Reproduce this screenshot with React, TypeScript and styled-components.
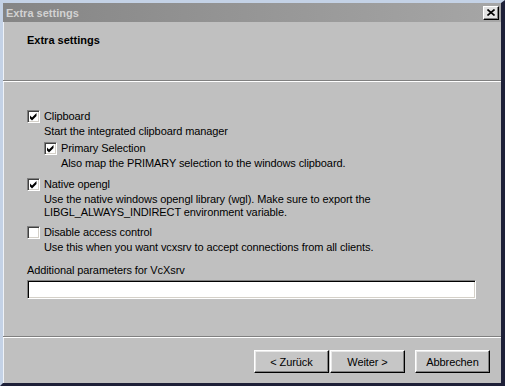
import React from 'react';
import styled, { createGlobalStyle } from 'styled-components';

const GlobalStyle = createGlobalStyle`
  html, body {
    margin: 0;
    padding: 0;
    background: #c0c0c0;
  }
  body {
    font-family: "Liberation Sans", Arial, sans-serif;
    font-size: 11px;
    color: #000;
  }
`;

const Window = styled.div`
  width: 505px;
  height: 386px;
  box-sizing: border-box;
  display: flex;
  flex-direction: column;
  background: #c0c0c0;
  border-style: solid;
  border-width: 3px 4px 3px 3px;
  border-color: #c4d2e6 #1e2038 #1e2038 #c4d2e6;
  box-shadow: inset 1px 1px 0 #eef2f8;
`;

const TitleBar = styled.div`
  height: 19px;
  flex: none;
  display: flex;
  align-items: center;
  justify-content: space-between;
  padding: 0 2px 0 3px;
  background: linear-gradient(to right, #858585, #a6a6a6);
`;

const TitleText = styled.span`
  color: #d2d2d2;
  font-weight: 700;
  font-size: 11px;
`;

const CloseButton = styled.button`
  width: 16px;
  height: 14px;
  padding: 0;
  display: flex;
  align-items: center;
  justify-content: center;
  background: #e2e2e2;
  border-style: solid;
  border-width: 1px;
  border-color: #ffffff #000000 #000000 #ffffff;
  box-shadow: inset -1px -1px 0 #808080;
`;

const Header = styled.div`
  height: 59px;
  flex: none;
  box-sizing: border-box;
  padding: 12px 0 0 24px;
  border-bottom: 1px solid #808080;
  box-shadow: 0 1px 0 #ffffff;
`;

const HeaderTitle = styled.div`
  font-weight: 700;
  font-size: 11px;
  line-height: 13px;
`;

const Body = styled.div`
  flex: 1;
  display: flex;
  flex-direction: column;
  padding: 27px 26px 0 24px;
  margin-top: 1px;
  letter-spacing: -0.1px;
`;

const Option = styled.div<{ indent?: boolean; gap?: number }>`
  display: flex;
  flex-direction: column;
  margin-left: ${({ indent }) => (indent ? 17 : 0)}px;
  margin-top: ${({ gap }) => gap ?? 0}px;
`;

const OptionRow = styled.label`
  height: 15px;
  display: flex;
  align-items: center;
  gap: 4px;
  line-height: 13px;
`;

const Box = styled.span`
  width: 13px;
  height: 13px;
  box-sizing: border-box;
  flex: none;
  background: #ffffff;
  border-style: solid;
  border-width: 1px;
  border-color: #808080 #ffffff #ffffff #808080;
  box-shadow: inset 1px 1px 0 #404040, inset -1px -1px 0 #d4d0c8;
  display: flex;
  align-items: center;
  justify-content: center;
`;

const Description = styled.div<{ first?: boolean }>`
  padding-left: 17px;
  margin-top: ${({ first }) => (first ? 1 : 0)}px;
  line-height: 13px;
`;

const FieldLabel = styled.div`
  margin-top: 10px;
  line-height: 13px;
`;

const TextInput = styled.input`
  margin-top: 3px;
  height: 19px;
  box-sizing: border-box;
  width: 449px;
  padding: 0 3px;
  font: inherit;
  background: #ffffff;
  border-style: solid;
  border-width: 1px;
  border-color: #808080 #ffffff #ffffff #808080;
  box-shadow: inset 1px 1px 0 #000000, inset -1px -1px 0 #d4d0c8;
  outline: none;
`;

const Footer = styled.div`
  flex: none;
  border-top: 1px solid #808080;
  box-shadow: inset 0 1px 0 #ffffff;
  display: flex;
  justify-content: flex-end;
  padding: 13px 11px 10px 0;
`;

const Button = styled.button<{ spaced?: boolean }>`
  width: 75px;
  height: 23px;
  box-sizing: border-box;
  margin-left: ${({ spaced }) => (spaced ? 10 : 1)}px;
  padding: 0;
  font-family: "Liberation Sans", Arial, sans-serif;
  font-size: 11px;
  letter-spacing: -0.1px;
  color: #000;
  background: #c6c6c6;
  border-style: solid;
  border-width: 1px;
  border-color: #ffffff #000000 #000000 #ffffff;
  box-shadow: inset -1px -1px 0 #808080, inset 1px 1px 0 #e8e8e8;
`;

const Check = () => (
  <svg width="9" height="9" viewBox="0 0 9 9">
    <path d="M1 3.5 L3 5.5 L7.5 1 L7.5 4 L3 8.5 L1 6.5 Z" fill="#000" />
  </svg>
);

const CloseIcon = () => (
  <svg width="8" height="7" viewBox="0 0 8 7">
    <path d="M0.5 0.5 L7.5 6.5 M7.5 0.5 L0.5 6.5" stroke="#000" strokeWidth="1.6" />
  </svg>
);

interface CheckOptionProps {
  label: string;
  checked: boolean;
  lines: string[];
  indent?: boolean;
  gap?: number;
  children?: React.ReactNode;
}

const CheckOption: React.FC<CheckOptionProps> = ({ label, checked, lines, indent, gap, children }) => (
  <Option indent={indent} gap={gap}>
    <OptionRow>
      <Box>{checked && <Check />}</Box>
      <span>{label}</span>
    </OptionRow>
    {lines.map((line, i) => (
      <Description key={i} first={i === 0}>{line}</Description>
    ))}
    {children}
  </Option>
);

const App: React.FC = () => {
  return (
    <>
      <GlobalStyle />
      <Window>
        <TitleBar>
          <TitleText>Extra settings</TitleText>
          <CloseButton><CloseIcon /></CloseButton>
        </TitleBar>
        <Header>
          <HeaderTitle>Extra settings</HeaderTitle>
        </Header>
        <Body>
          <CheckOption
            label="Clipboard"
            checked
            lines={['Start the integrated clipboard manager']}>
            <CheckOption
              label="Primary Selection"
              checked
              indent
              gap={3}
              lines={['Also map the PRIMARY selection to the windows clipboard.']} />
          </CheckOption>
          <CheckOption
            label="Native opengl"
            checked
            gap={7}
            lines={[
              'Use the native windows opengl library (wgl). Make sure to export the',
              'LIBGL_ALWAYS_INDIRECT environment variable.',
            ]} />
          <CheckOption
            label="Disable access control"
            checked={false}
            gap={6}
            lines={['Use this when you want vcxsrv to accept connections from all clients.']} />
          <FieldLabel>Additional parameters for VcXsrv</FieldLabel>
          <TextInput type="text" />
        </Body>
        <Footer>
          <Button>&lt; Zurück</Button>
          <Button>Weiter &gt;</Button>
          <Button spaced>Abbrechen</Button>
        </Footer>
      </Window>
    </>
  );
};

export default App;
